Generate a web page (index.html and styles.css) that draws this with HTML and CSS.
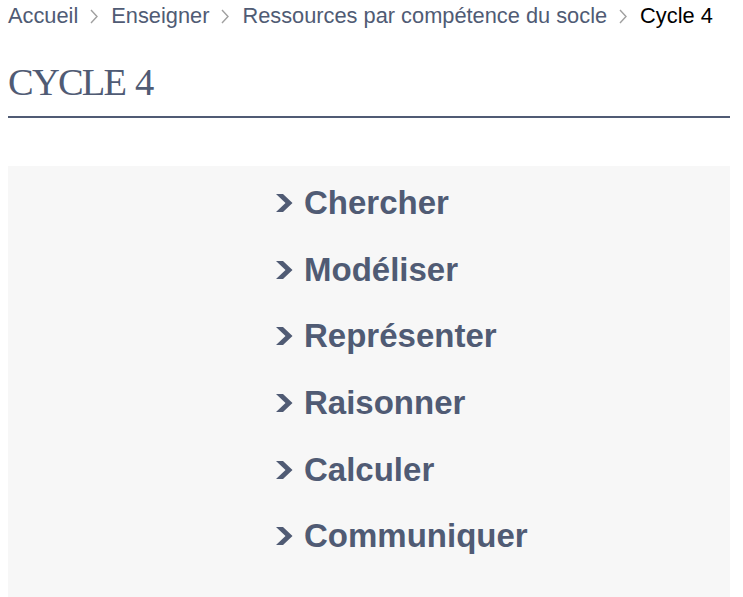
FILE: index.html
```html
<!DOCTYPE html>
<html lang="fr">
<head>
<meta charset="utf-8">
<title>Cycle 4</title>
<link rel="stylesheet" href="styles.css">
</head>
<body>
<nav class="breadcrumb">
  <a class="crumb" href="#">Accueil</a>
  <svg class="sep" width="8" height="15" viewBox="0 0 8 15"><polyline points="1,1 7,7.5 1,14" fill="none" stroke="#a0a0a0" stroke-width="1.4"/></svg>
  <a class="crumb" href="#">Enseigner</a>
  <svg class="sep" width="8" height="15" viewBox="0 0 8 15"><polyline points="1,1 7,7.5 1,14" fill="none" stroke="#a0a0a0" stroke-width="1.4"/></svg>
  <a class="crumb" href="#">Ressources par compétence du socle</a>
  <svg class="sep" width="8" height="15" viewBox="0 0 8 15"><polyline points="1,1 7,7.5 1,14" fill="none" stroke="#a0a0a0" stroke-width="1.4"/></svg>
  <span class="crumb current">Cycle 4</span>
</nav>
<h1 class="title">CYCLE 4</h1>
<section class="panel">
  <ul class="list">
    <li class="item"><svg class="chev" width="17" height="18" viewBox="0 0 17 18"><polygon points="0,0 7,0 16.5,9 7,18 0,18 9.5,9" fill="#505b74"/></svg><a href="#">Chercher</a></li>
    <li class="item"><svg class="chev" width="17" height="18" viewBox="0 0 17 18"><polygon points="0,0 7,0 16.5,9 7,18 0,18 9.5,9" fill="#505b74"/></svg><a href="#">Modéliser</a></li>
    <li class="item"><svg class="chev" width="17" height="18" viewBox="0 0 17 18"><polygon points="0,0 7,0 16.5,9 7,18 0,18 9.5,9" fill="#505b74"/></svg><a href="#">Représenter</a></li>
    <li class="item"><svg class="chev" width="17" height="18" viewBox="0 0 17 18"><polygon points="0,0 7,0 16.5,9 7,18 0,18 9.5,9" fill="#505b74"/></svg><a href="#">Raisonner</a></li>
    <li class="item"><svg class="chev" width="17" height="18" viewBox="0 0 17 18"><polygon points="0,0 7,0 16.5,9 7,18 0,18 9.5,9" fill="#505b74"/></svg><a href="#">Calculer</a></li>
    <li class="item"><svg class="chev" width="17" height="18" viewBox="0 0 17 18"><polygon points="0,0 7,0 16.5,9 7,18 0,18 9.5,9" fill="#505b74"/></svg><a href="#">Communiquer</a></li>
  </ul>
</section>
</body>
</html>
```
FILE: styles.css
```css
html, body {
  margin: 0;
  padding: 0;
  background: #ffffff;
}
body {
  padding: 4px 13px 0 8px;
  font-family: "Liberation Sans", Arial, sans-serif;
  color: #505b74;
}
.breadcrumb {
  display: flex;
  align-items: center;
  font-size: 21.8px;
  line-height: 24px;
  height: 24px;
  white-space: nowrap;
}
.crumb {
  color: #505b74;
  text-decoration: none;
}
.crumb.current {
  color: #000000;
}
.sep {
  display: block;
  margin: 0 13px 0 12px;
}
.title {
  margin: 31px 0 0 0;
  padding: 0 0 11px 0;
  font-family: "Liberation Serif", "Times New Roman", serif;
  font-weight: normal;
  font-size: 38.5px;
  line-height: 46px;
  letter-spacing: -1.8px;
  word-spacing: 2px;
  color: #505b74;
  border-bottom: 2px solid #505b74;
}
.panel {
  margin-top: 48px;
  background: #f7f7f7;
  min-height: 431px;
  padding: 17px 0 0 268px;
  box-sizing: border-box;
}
.list {
  list-style: none;
  margin: 0;
  padding: 0;
}
.item {
  display: flex;
  align-items: center;
  height: 40px;
  margin-bottom: 26.7px;
  font-size: 33px;
  font-weight: bold;
}
.item a {
  color: #505b74;
  text-decoration: none;
  line-height: 40px;
}
.chev {
  display: block;
  margin-right: 11px;
  flex: none;
}
```
